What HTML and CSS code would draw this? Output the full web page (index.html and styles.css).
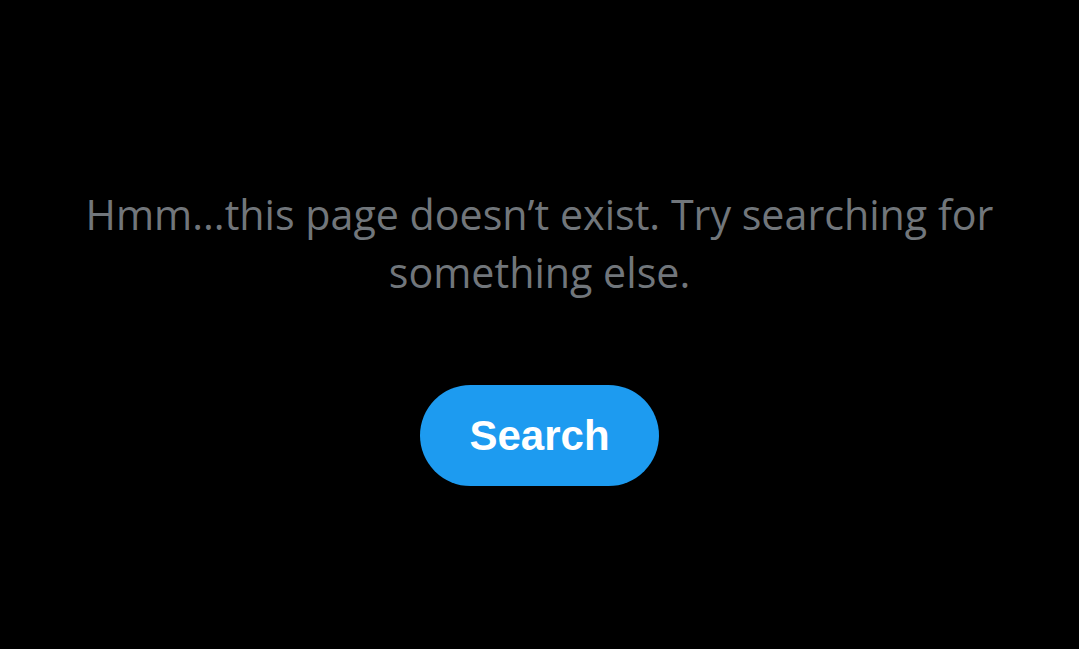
FILE: index.html
```html
<!DOCTYPE html>
<html lang="en">
<head>
<meta charset="utf-8">
<title>Page not found</title>
<link rel="stylesheet" href="styles.css">
</head>
<body>
<main class="page">
  <div class="empty">
    <p class="message">Hmm...this page doesn’t exist. Try searching for something else.</p>
    <button class="search-btn" type="button">Search</button>
  </div>
</main>
</body>
</html>
```

FILE: styles.css
```css
html, body {
  margin: 0;
  padding: 0;
  background: #000;
  height: 100%;
}
.page {
  display: flex;
  justify-content: center;
  padding-top: 185px;
}
.empty {
  display: flex;
  flex-direction: column;
  align-items: center;
  width: 950px;
}
.message {
  margin: 0;
  font-family: "Open Sans", "Noto Sans", sans-serif;
  font-size: 41.2px;
  line-height: 58px;
  color: #71767b;
  text-align: center;
}
.search-btn {
  margin-top: 84px;
  height: 101px;
  padding: 0 49px;
  border: none;
  border-radius: 51px;
  background: #1d9bf0;
  color: #fff;
  font-family: "Liberation Sans", Arial, sans-serif;
  font-weight: 700;
  font-size: 42px;
}
```
